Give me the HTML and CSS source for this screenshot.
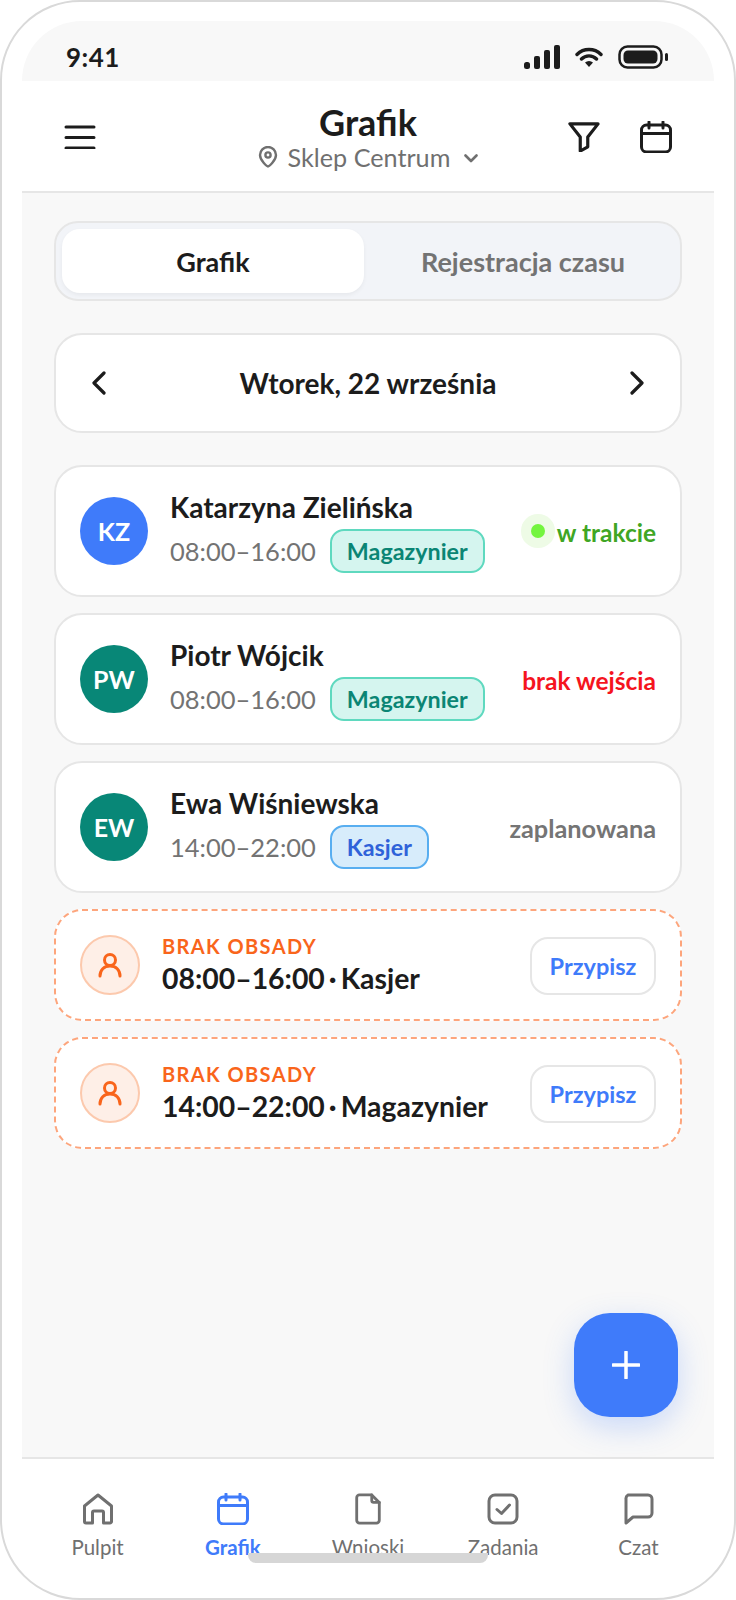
FILE: index.html
```html
<!DOCTYPE html>
<html lang="pl">
<head>
    <meta charset="UTF-8">
    <meta name="viewport" content="width=device-width, initial-scale=1.0">
    <title>Grafik</title>
    <link rel="stylesheet" href="styles.css">
</head>
<body>
    <div class="phone">
        <div class="screen">
            <div class="status-bar">
                <span class="clock">9:41</span>
                <div class="status-icons">
                    <svg class="signal" viewBox="0 0 36 24"><rect x="0" y="17" width="6" height="7" rx="2.5"/><rect x="10" y="11" width="6" height="13" rx="2"/><rect x="20" y="5" width="6" height="19" rx="2"/><rect x="30" y="0" width="6" height="24" rx="2"/></svg>
                    <svg class="wifi" viewBox="0 0 28 20"><path d="M2 7.500a17 17 0 0 1 24 0M6.500 12a10.500 10.500 0 0 1 15 0" fill="none" stroke="#1c1c1c" stroke-width="3.400" stroke-linecap="round"/><path d="M10 15.500a6 6 0 0 1 8 0L14 20z"/></svg>
                    <svg class="battery" viewBox="0 0 50 24"><rect x="1.500" y="1.500" width="42" height="21" rx="8" fill="none" stroke="#1c1c1c" stroke-width="2.500"/><rect x="5.500" y="5.500" width="34" height="13" rx="4.500"/><rect x="47" y="8" width="3" height="8" rx="1.500"/></svg>
                </div>
            </div>

            <header class="top-bar">
                <svg class="hamburger" viewBox="0 0 32 24"><path d="M2 2h28M2 12.500h28M2 23h28"/></svg>
                <div class="title-block">
                    <h1>Grafik</h1>
                    <div class="location">
                        <svg class="pin" viewBox="0 0 20 22"><path d="M10 20.500c-1 0-8-6-8-11.500a8 8 0 0 1 16 0c0 5.500-7 11.500-8 11.500z"/><circle cx="10" cy="9" r="2.600"/></svg>
                        <span>Sklep Centrum</span>
                        <svg class="chevron" viewBox="0 0 14 9"><path d="M1.500 1.500 7 7l5.500-5.500"/></svg>
                    </div>
                </div>
                <div class="top-actions">
                    <svg class="icon-filter" viewBox="0 0 34 32"><path d="M2 2h30L21 16v10.500L13 31V16z"/></svg>
                    <svg class="icon-calendar" viewBox="0 0 32 32"><rect x="1.500" y="4" width="29" height="27" rx="5"/><path d="M1.500 12.500h29M9 1v6M23 1v6"/></svg>
                </div>
            </header>

            <main class="content">
                <div class="tabs">
                    <div class="tab active">Grafik</div>
                    <div class="tab">Rejestracja czasu</div>
                </div>

                <div class="date-card">
                    <svg class="arrow" viewBox="0 0 14 24"><path d="M12 2 2 12l10 10"/></svg>
                    <span>Wtorek, 22 września</span>
                    <svg class="arrow" viewBox="0 0 14 24"><path d="m2 2 10 10L2 22"/></svg>
                </div>

                <div class="shift-list">
                    <div class="shift">
                        <div class="avatar blue">KZ</div>
                        <div class="shift-info">
                            <div class="name">Katarzyna Zielińska</div>
                            <div class="shift-meta">
                                <span class="hours">08:00–16:00</span>
                                <span class="tag tag-green">Magazynier</span>
                            </div>
                        </div>
                        <div class="state state-active"><i class="dot"></i>w trakcie</div>
                    </div>

                    <div class="shift">
                        <div class="avatar teal">PW</div>
                        <div class="shift-info">
                            <div class="name">Piotr Wójcik</div>
                            <div class="shift-meta">
                                <span class="hours">08:00–16:00</span>
                                <span class="tag tag-green">Magazynier</span>
                            </div>
                        </div>
                        <div class="state state-missing">brak wejścia</div>
                    </div>

                    <div class="shift">
                        <div class="avatar teal">EW</div>
                        <div class="shift-info">
                            <div class="name">Ewa Wiśniewska</div>
                            <div class="shift-meta">
                                <span class="hours">14:00–22:00</span>
                                <span class="tag tag-blue">Kasjer</span>
                            </div>
                        </div>
                        <div class="state state-planned">zaplanowana</div>
                    </div>

                    <div class="open-shift">
                        <div class="open-avatar">
                            <svg viewBox="0 0 24 26"><circle cx="12" cy="8" r="5.500"/><path d="M2 24c0-6 4-10 10-10s10 4 10 10"/></svg>
                        </div>
                        <div class="open-info">
                            <div class="open-label">BRAK OBSADY</div>
                            <div class="open-text">08:00–16:00<span class="sep">·</span>Kasjer</div>
                        </div>
                        <button class="assign">Przypisz</button>
                    </div>

                    <div class="open-shift">
                        <div class="open-avatar">
                            <svg viewBox="0 0 24 26"><circle cx="12" cy="8" r="5.500"/><path d="M2 24c0-6 4-10 10-10s10 4 10 10"/></svg>
                        </div>
                        <div class="open-info">
                            <div class="open-label">BRAK OBSADY</div>
                            <div class="open-text">14:00–22:00<span class="sep">·</span>Magazynier</div>
                        </div>
                        <button class="assign">Przypisz</button>
                    </div>
                </div>

                <button class="fab">
                    <svg viewBox="0 0 28 28"><path d="M14 1v26M1 14h26"/></svg>
                </button>
            </main>

            <nav class="tab-bar">
                <div class="nav-item">
                    <svg viewBox="0 0 32 32"><path d="M16 2 2.500 13v15.500a1.500 1.500 0 0 0 1.500 1.500h6.500V19.500a1.500 1.500 0 0 1 1.500-1.500h8a1.500 1.500 0 0 1 1.500 1.500V30H28a1.500 1.500 0 0 0 1.500-1.500V13z"/></svg>
                    <span>Pulpit</span>
                </div>
                <div class="nav-item current">
                    <svg viewBox="0 0 32 32"><rect x="1.500" y="4" width="29" height="27" rx="5"/><path d="M1.500 12.500h29M9 1v6M23 1v6"/></svg>
                    <span>Grafik</span>
                </div>
                <div class="nav-item">
                    <svg viewBox="0 0 32 34"><path d="M7 2h13l8 8v19a3 3 0 0 1-3 3H7a3 3 0 0 1-3-3V5a3 3 0 0 1 3-3z"/><path d="M20 2v6a2 2 0 0 0 2 2h6"/></svg>
                    <span>Wnioski</span>
                </div>
                <div class="nav-item">
                    <svg viewBox="0 0 32 32"><rect x="2" y="2" width="28" height="28" rx="6"/><path d="m10 16.500 4.500 4L22.500 12"/></svg>
                    <span>Zadania</span>
                </div>
                <div class="nav-item">
                    <svg viewBox="0 0 32 32"><path d="M6 2h20a4 4 0 0 1 4 4v14a4 4 0 0 1-4 4H11l-7 6V6a4 4 0 0 1 2-4z"/></svg>
                    <span>Czat</span>
                </div>
            </nav>

            <div class="home-bar"></div>
        </div>
    </div>
</body>
</html>
```
FILE: styles.css
```css
* {
    box-sizing: border-box;
}

body {
    margin: 0;
    font-family: Lato, "Noto Sans", sans-serif;
    color: #1c1c1c;
    background: #fff;
}

svg {
    display: block;
    flex: none;
}

.phone {
    width: 736px;
    height: 1600px;
    padding: 19px 20px 18px;
    background: #fff;
    border: 2px solid #d9d9d9;
    border-radius: 80px;
}

.screen {
    position: relative;
    display: flex;
    flex-direction: column;
    height: 100%;
    overflow: hidden;
    background: #fff;
    border-radius: 60px;
}

/* status bar */
.status-bar {
    display: flex;
    align-items: center;
    justify-content: space-between;
    height: 60px;
    padding: 12px 46px 0 44px;
    background: #f8f8f8;
}

.clock {
    font-size: 26px;
    font-weight: 700;
    letter-spacing: 0.5px;
}

.status-icons {
    display: flex;
    align-items: center;
    gap: 15px;
}

.status-icons svg {
    fill: #1c1c1c;
}

.signal {
    width: 36px;
    height: 24px;
}

.wifi {
    width: 28px;
    height: 20px;
}

.battery {
    width: 50px;
    height: 24px;
}

/* header */
.top-bar {
    display: grid;
    grid-template-columns: 1fr auto 1fr;
    align-items: center;
    height: 112px;
    padding: 2px 42px 0;
    border-bottom: 2px solid #e6e6e6;
}

.hamburger {
    width: 32px;
    height: 24px;
    fill: none;
    stroke: #1c1c1c;
    stroke-width: 3;
    stroke-linecap: round;
}

.title-block {
    text-align: center;
}

h1 {
    margin: 0;
    font-size: 36px;
    line-height: 40px;
    font-weight: 700;
}

.location {
    display: flex;
    align-items: center;
    gap: 10px;
    color: #707070;
    font-size: 25.2px;
    line-height: 30px;
}

.pin {
    width: 20px;
    height: 22px;
    fill: none;
    stroke: #707070;
    stroke-width: 2.4;
}

.chevron {
    width: 14px;
    height: 9px;
    margin: 2px 0 0 4px;
    fill: none;
    stroke: #707070;
    stroke-width: 2.6;
    stroke-linecap: round;
    stroke-linejoin: round;
}

.top-actions {
    display: flex;
    justify-content: flex-end;
    align-items: center;
    gap: 40px;
}

.icon-filter {
    width: 32px;
    height: 30px;
    fill: none;
    stroke: #1c1c1c;
    stroke-width: 3.4;
    stroke-linejoin: round;
}

.icon-calendar {
    width: 32px;
    height: 32px;
    fill: none;
    stroke: #1c1c1c;
    stroke-width: 3;
    stroke-linecap: round;
}

/* content */
.content {
    position: relative;
    flex: 1;
    padding: 28px 32px 0;
    background: #f8f8f8;
}

.tabs {
    display: flex;
    gap: 8px;
    height: 80px;
    padding: 6px;
    background: #f2f4f8;
    border: 2px solid #e6e6e6;
    border-radius: 24px;
}

.tab {
    flex: 1;
    display: flex;
    align-items: center;
    justify-content: center;
    border-radius: 18px;
    color: #737373;
    font-size: 27px;
    font-weight: 700;
}

.tab.active {
    background: #fff;
    color: #1c1c1c;
    box-shadow: 0 2px 4px rgba(0, 0, 0, 0.05);
}

.date-card {
    display: flex;
    align-items: center;
    justify-content: space-between;
    height: 100px;
    margin-top: 32px;
    padding: 0 36px;
    background: #fff;
    border: 2px solid #e6e6e6;
    border-radius: 28px;
    font-size: 28px;
    font-weight: 700;
}

.arrow {
    width: 14px;
    height: 24px;
    fill: none;
    stroke: #1c1c1c;
    stroke-width: 3.2;
    stroke-linecap: round;
    stroke-linejoin: round;
}

.shift-list {
    display: flex;
    flex-direction: column;
    gap: 16px;
    margin-top: 32px;
}

.shift {
    display: flex;
    align-items: center;
    height: 132px;
    padding: 0 24px;
    background: #fff;
    border: 2px solid #e6e6e6;
    border-radius: 28px;
}

.avatar {
    display: flex;
    align-items: center;
    justify-content: center;
    flex: none;
    width: 68px;
    height: 68px;
    border-radius: 50%;
    color: #fff;
    font-size: 25px;
    font-weight: 700;
}

.blue {
    background: #3f7bfa;
}

.teal {
    background: #088777;
}

.shift-info {
    flex: 1;
    margin-left: 22px;
}

.name {
    font-size: 28px;
    line-height: 36px;
    font-weight: 700;
}

.shift-meta {
    display: flex;
    align-items: center;
    gap: 14px;
    margin-top: 4px;
}

.hours {
    color: #737373;
    font-size: 25.5px;
}

.tag {
    display: flex;
    align-items: center;
    height: 44px;
    padding: 0 15px;
    border: 2px solid;
    border-radius: 14px;
    font-size: 23.3px;
    font-weight: 700;
}

.tag-green {
    background: #d5f5ef;
    border-color: #5fd9bf;
    color: #0b8574;
}

.tag-blue {
    background: #d7ecfb;
    border-color: #58aef0;
    color: #2f62d9;
}

.state {
    display: flex;
    align-items: center;
    padding-top: 2px;
    font-size: 24.5px;
    font-weight: 700;
}

.state-active {
    color: #3fa624;
}

.state-missing {
    color: #f5141e;
}

.state-planned {
    color: #757575;
    font-size: 25.3px;
}

.dot {
    width: 14px;
    height: 14px;
    margin: -2px 12px 0 10px;
    background: #74f53f;
    border-radius: 50%;
    box-shadow: 0 0 0 10px #eefbe6;
}

.open-shift {
    display: flex;
    align-items: center;
    height: 112px;
    padding: 0 24px;
    background: #fff;
    border: 2px dashed #fda57c;
    border-radius: 28px;
}

.open-avatar {
    display: flex;
    align-items: center;
    justify-content: center;
    flex: none;
    width: 60px;
    height: 60px;
    background: #feefe7;
    border: 2px solid #fcc9ad;
    border-radius: 50%;
}

.open-avatar svg {
    width: 24px;
    height: 26px;
    fill: none;
    stroke: #f9651b;
    stroke-width: 3;
    stroke-linecap: round;
}

.open-info {
    flex: 1;
    margin-left: 22px;
}

.open-label {
    margin-bottom: 2px;
    color: #f9651b;
    font-size: 20px;
    line-height: 24px;
    font-weight: 700;
    letter-spacing: 1.4px;
}

.open-text {
    font-size: 28.4px;
    line-height: 36px;
    font-weight: 700;
}

.sep {
    margin: 0 4px;
}

.assign {
    width: 126px;
    height: 58px;
    margin-top: 2px;
    padding: 0;
    background: #fff;
    border: 2px solid #e6e6e6;
    border-radius: 18px;
    color: #3f7bfa;
    font-family: inherit;
    font-size: 23.5px;
    font-weight: 700;
}

.fab {
    position: absolute;
    right: 36px;
    bottom: 40px;
    display: flex;
    align-items: center;
    justify-content: center;
    width: 104px;
    height: 104px;
    padding: 0;
    background: #3f7bfa;
    border: none;
    border-radius: 36px;
    box-shadow: 0 10px 30px rgba(63, 123, 250, 0.25);
}

.fab svg {
    width: 28px;
    height: 28px;
    fill: none;
    stroke: #fff;
    stroke-width: 3.5;
    stroke-linecap: round;
}

/* bottom navigation */
.tab-bar {
    display: grid;
    grid-template-columns: repeat(5, 1fr);
    height: 123px;
    padding: 34px 8px 0;
    background: #fff;
    border-top: 2px solid #e6e6e6;
}

.nav-item {
    display: flex;
    flex-direction: column;
    align-items: center;
    color: #707070;
    font-size: 20.5px;
}

.nav-item svg {
    width: 32px;
    height: 32px;
    fill: none;
    stroke: #707070;
    stroke-width: 3;
    stroke-linejoin: round;
    stroke-linecap: round;
}

.nav-item span {
    margin-top: 9px;
    line-height: 26px;
}

.nav-item.current {
    color: #3f7bfa;
    font-weight: 700;
}

.nav-item.current svg {
    stroke: #3f7bfa;
}

.home-bar {
    position: absolute;
    left: 226px;
    bottom: 17px;
    width: 240px;
    height: 10px;
    background: #d6d6d6;
    border-radius: 0 0 8px 8px;
}
```
